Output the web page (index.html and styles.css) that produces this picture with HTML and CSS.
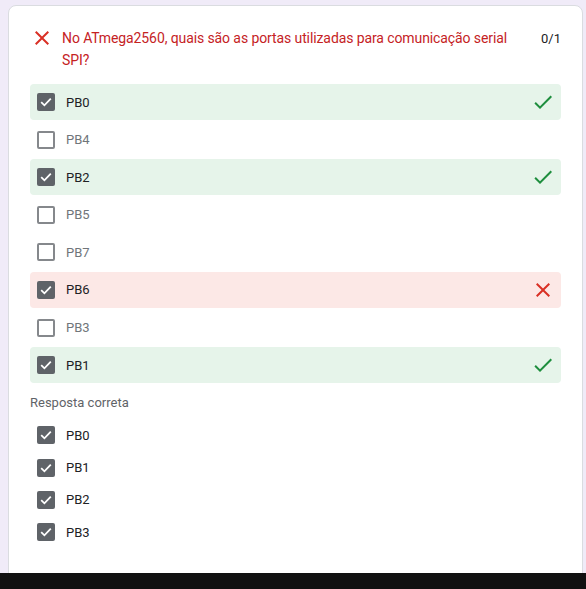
FILE: index.html
```html
<!DOCTYPE html>
<html lang="pt">
<head>
<meta charset="utf-8">
<link rel="stylesheet" href="styles.css">
</head>
<body>
<div class="page">
  <main class="area">
    <section class="card">
      <header class="title">
        <svg class="ico-x" viewBox="0 0 24 24" width="24" height="24"><path fill="#d93025" d="M19 6.41L17.59 5 12 10.59 6.41 5 5 6.41 10.59 12 5 17.59 6.41 19 12 13.41 17.59 19 19 17.59 13.41 12z"/></svg>
        <div class="qtext">No ATmega2560, quais são as portas utilizadas para comunicação serial SPI?</div>
        <div class="score">0/1</div>
      </header>

      <ul class="opts">
        <li class="opt ok"><span class="cb on"><svg viewBox="0 0 18 18" width="18" height="18"><path d="M4.2 9.2l3.2 3.1 6.4-6.6" fill="none" stroke="#fff" stroke-width="1.8"/></svg></span><span class="lbl">PB0</span><svg class="mark" viewBox="0 0 24 24" width="24" height="24"><path fill="#1e8e3e" d="M9 16.17L4.83 12l-1.42 1.41L9 19 21 7l-1.41-1.41z"/></svg></li>
        <li class="opt"><span class="cb"></span><span class="lbl">PB4</span></li>
        <li class="opt ok"><span class="cb on"><svg viewBox="0 0 18 18" width="18" height="18"><path d="M4.2 9.2l3.2 3.1 6.4-6.6" fill="none" stroke="#fff" stroke-width="1.8"/></svg></span><span class="lbl">PB2</span><svg class="mark" viewBox="0 0 24 24" width="24" height="24"><path fill="#1e8e3e" d="M9 16.17L4.83 12l-1.42 1.41L9 19 21 7l-1.41-1.41z"/></svg></li>
        <li class="opt"><span class="cb"></span><span class="lbl">PB5</span></li>
        <li class="opt"><span class="cb"></span><span class="lbl">PB7</span></li>
        <li class="opt bad"><span class="cb on"><svg viewBox="0 0 18 18" width="18" height="18"><path d="M4.2 9.2l3.2 3.1 6.4-6.6" fill="none" stroke="#fff" stroke-width="1.8"/></svg></span><span class="lbl">PB6</span><svg class="mark" viewBox="0 0 24 24" width="24" height="24"><path fill="#d93025" d="M19 6.41L17.59 5 12 10.59 6.41 5 5 6.41 10.59 12 5 17.59 6.41 19 12 13.41 17.59 19 19 17.59 13.41 12z"/></svg></li>
        <li class="opt"><span class="cb"></span><span class="lbl">PB3</span></li>
        <li class="opt ok"><span class="cb on"><svg viewBox="0 0 18 18" width="18" height="18"><path d="M4.2 9.2l3.2 3.1 6.4-6.6" fill="none" stroke="#fff" stroke-width="1.8"/></svg></span><span class="lbl">PB1</span><svg class="mark" viewBox="0 0 24 24" width="24" height="24"><path fill="#1e8e3e" d="M9 16.17L4.83 12l-1.42 1.41L9 19 21 7l-1.41-1.41z"/></svg></li>
      </ul>

      <div class="correct-title">Resposta correta</div>
      <ul class="answers">
        <li class="ans"><span class="cb on"><svg viewBox="0 0 18 18" width="18" height="18"><path d="M4.2 9.2l3.2 3.1 6.4-6.6" fill="none" stroke="#fff" stroke-width="1.8"/></svg></span><span class="lbl">PB0</span></li>
        <li class="ans"><span class="cb on"><svg viewBox="0 0 18 18" width="18" height="18"><path d="M4.2 9.2l3.2 3.1 6.4-6.6" fill="none" stroke="#fff" stroke-width="1.8"/></svg></span><span class="lbl">PB1</span></li>
        <li class="ans"><span class="cb on"><svg viewBox="0 0 18 18" width="18" height="18"><path d="M4.2 9.2l3.2 3.1 6.4-6.6" fill="none" stroke="#fff" stroke-width="1.8"/></svg></span><span class="lbl">PB2</span></li>
        <li class="ans"><span class="cb on"><svg viewBox="0 0 18 18" width="18" height="18"><path d="M4.2 9.2l3.2 3.1 6.4-6.6" fill="none" stroke="#fff" stroke-width="1.8"/></svg></span><span class="lbl">PB3</span></li>
      </ul>
    </section>
  </main>
  <footer class="bar"></footer>
</div>
</body>
</html>
```

FILE: styles.css
```css
* { box-sizing: border-box; }
html, body { margin: 0; padding: 0; }
body {
  font-family: Roboto, "Noto Sans", Arial, sans-serif;
  background: #f0ebf8;
  color: #202124;
}
.page {
  height: 589px;
  display: flex;
  flex-direction: column;
  overflow: hidden;
}
.area {
  flex: 1;
  min-height: 0;
  padding: 5px 3px 0 8px;
  overflow: hidden;
}
.card {
  background: #fff;
  border: 1px solid #dadce0;
  border-radius: 8px;
  padding: 20px 21px 40px 21px;
  height: 640px;
}
.title {
  display: flex;
  align-items: flex-start;
}
.ico-x { flex: none; }
.qtext {
  flex: 1;
  margin-left: 8px;
  font-size: 14px;
  line-height: 22px;
  color: #c5221f;
  padding-top: 1px;
  letter-spacing: -0.1px;
}
.score {
  flex: none;
  margin-left: 20px;
  font-size: 13px;
  line-height: 22px;
  padding-top: 2px;
  color: #202124;
}
ul { list-style: none; margin: 0; padding: 0; }
.opts {
  margin-top: 13px;
  display: flex;
  flex-direction: column;
  gap: 1.6px;
}
.opt {
  height: 36px;
  display: flex;
  align-items: center;
  padding: 0 6px 0 7px;
  border-radius: 4px;
}
.opt.ok { background: #e6f4ea; }
.opt.bad { background: #fce8e6; }
.cb {
  flex: none;
  width: 18px;
  height: 18px;
  border: 2px solid #85888c;
  border-radius: 2px;
  display: flex;
}
.cb.on {
  border: none;
  background: #5f6368;
}
.lbl {
  flex: 1;
  margin-left: 11px;
  font-size: 13px;
  color: #70757a;
}
.cb.on + .lbl { color: #202124; }
.mark { flex: none; }
.correct-title {
  margin-top: 11px;
  font-size: 13px;
  color: #5f6368;
  line-height: 18px;
}
.answers {
  margin-top: 7px;
  display: flex;
  flex-direction: column;
}
.ans {
  height: 32.3px;
  display: flex;
  align-items: center;
  padding-left: 7px;
}
.bar {
  flex: none;
  height: 16px;
  background: #111;
}
```
